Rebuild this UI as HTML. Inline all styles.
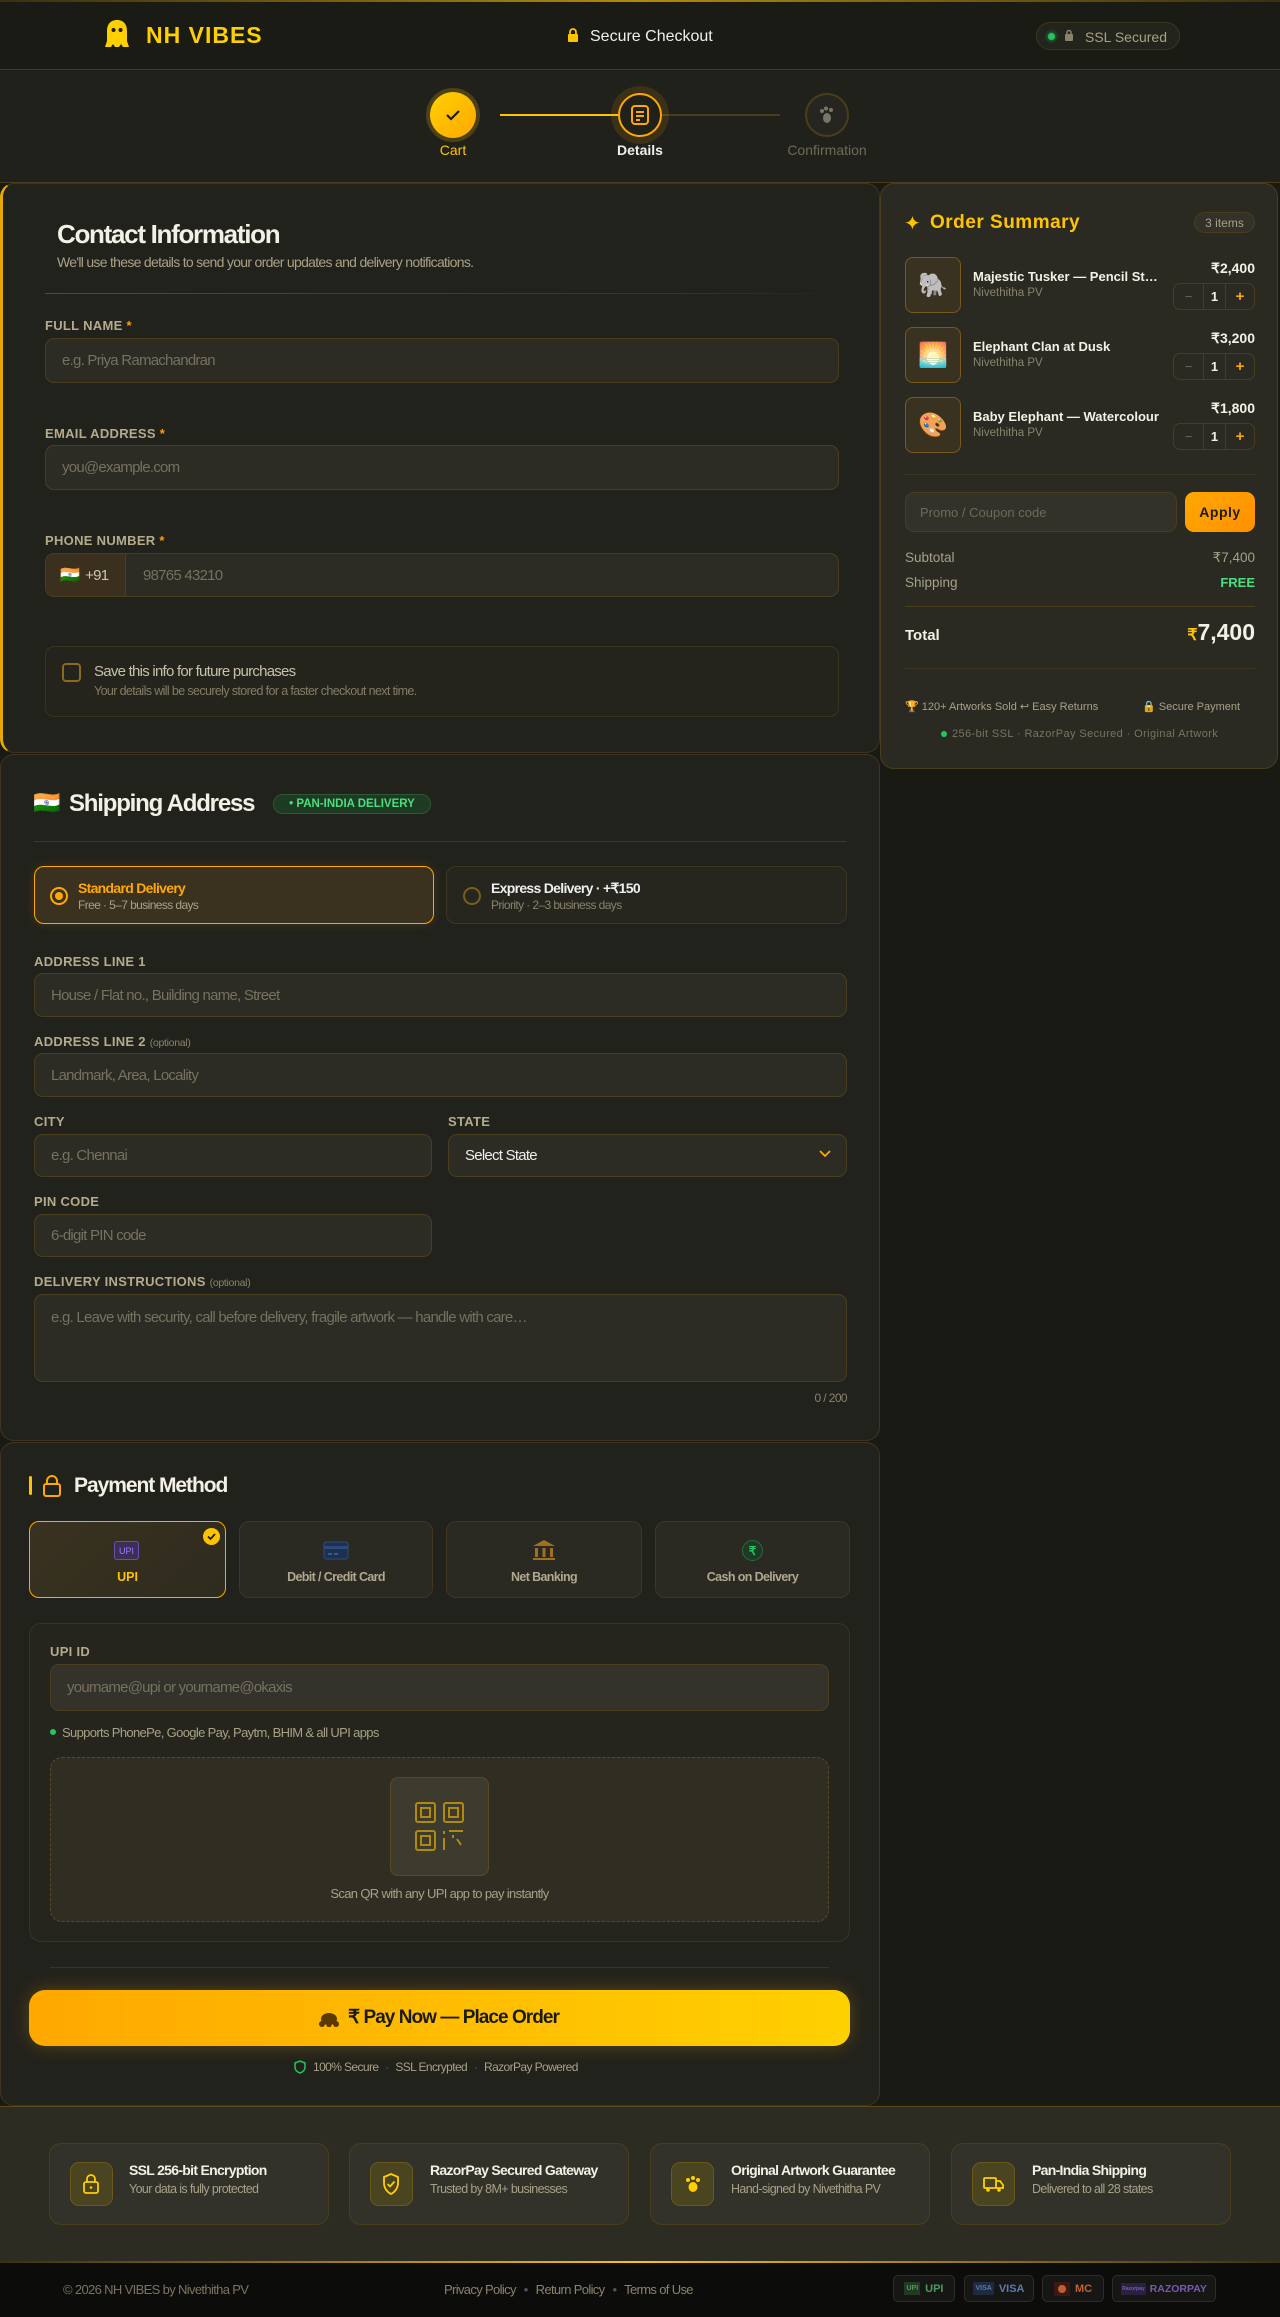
<!DOCTYPE html>
<html><head><meta charset="utf-8"><style>
*{box-sizing:border-box;margin:0;padding:0}
body{width:1280px;height:2317px;background:#1a1a15;font-family:"Liberation Sans",sans-serif;color:#eee;position:relative;overflow:hidden}
.a{position:absolute}
.n{font-family:"Liberation Sans Narrow","Liberation Sans",sans-serif;letter-spacing:-0.05em}
.panel{position:absolute;background:#22221c;border:1px solid #3d3521;border-radius:14px}
.lbl{position:absolute;font-family:"Liberation Sans Narrow","Liberation Sans",sans-serif;font-weight:bold;font-size:13px;letter-spacing:0.3px;color:#b5ab8c}
.lbl i{font-style:normal;color:#ff9f00}
.lbl s{text-decoration:none;font-weight:normal;letter-spacing:-0.3px;font-size:10.5px;color:#8a836b}
.inp{position:absolute;background:#2c2b24;border:1px solid #4a3e1f;border-radius:9px;color:#77715f;font-family:"Liberation Sans Narrow","Liberation Sans",sans-serif;font-size:15px;letter-spacing:-0.05em;padding-left:16px;display:flex;align-items:center}
</style></head><body>
<!-- header -->
<div class="a" style="left:0;top:0;width:1280px;height:70px;background:#1b1b16;border-bottom:1px solid #4a3d1c"></div>
<div class="a" style="left:0;top:0;width:1280px;height:2px;background:linear-gradient(90deg,#3a3010,#b08a10,#3a3010)"></div>
<svg class="a" style="left:104px;top:19px" width="26" height="30" viewBox="0 0 26 30"><path d="M13 1C6 1 3 6 3 12v10l-2 6h6l2-3 2 3h4l2-3 2 3h6l-2-6V12C23 6 20 1 13 1z" fill="#ffd000"/><circle cx="9.5" cy="11" r="2" fill="#1b1b16"/><circle cx="16.5" cy="11" r="2" fill="#1b1b16"/></svg>
<div class="a" style="left:146px;top:22px;font-size:23px;font-weight:bold;color:#ffd000;letter-spacing:1px">NH VIBES</div>
<svg class="a" style="left:567px;top:28px" width="12" height="15" viewBox="0 0 12 15"><rect x="1" y="6" width="10" height="8" rx="1" fill="#ffc400"/><path d="M3 6V4a3 3 0 0 1 6 0v2" stroke="#ffc400" stroke-width="1.8" fill="none"/></svg>
<div class="a n" style="left:590px;top:28px;font-size:16px;color:#eee;letter-spacing:0">Secure Checkout</div>
<div class="a" style="left:1036px;top:22px;width:144px;height:28px;border-radius:14px;background:#23241c;border:1px solid #3a3620"></div>
<div class="a" style="left:1048px;top:33px;width:7px;height:7px;border-radius:50%;background:#22c55e;box-shadow:0 0 5px #22c55e"></div>
<svg class="a" style="left:1064px;top:29px" width="10" height="13" viewBox="0 0 10 13"><rect x="1" y="5" width="8" height="7" rx="1" fill="#8a836b"/><path d="M3 5V3.5a2 2 0 0 1 4 0V5" stroke="#8a836b" stroke-width="1.5" fill="none"/></svg>
<div class="a n" style="left:1085px;top:29px;font-size:14px;color:#a8a186;letter-spacing:0">SSL Secured</div>
<!-- stepper -->
<div class="a" style="left:0;top:71px;width:1280px;height:112px;background:#21211b;border-bottom:1px solid #4a3d1c"></div>
<div class="a" style="left:500px;top:114px;width:280px;height:2px;background:#4a3d1c"></div>
<div class="a" style="left:500px;top:114px;width:140px;height:2px;background:#ffc400"></div>
<div class="a" style="left:430px;top:92px;width:46px;height:46px;border-radius:50%;background:linear-gradient(135deg,#ffd000,#ffa800);box-shadow:0 0 0 4px rgba(255,200,0,.2)"></div>
<svg class="a" style="left:444px;top:106px" width="18" height="18" viewBox="0 0 18 18"><path d="M3 9l4 4 8-8" stroke="#1b1b16" stroke-width="2.2" fill="none"/></svg>
<div class="a" style="left:611px;top:86px;width:58px;height:58px;border-radius:50%;background:rgba(255,160,0,.12)"></div>
<div class="a" style="left:618px;top:93px;width:44px;height:44px;border-radius:50%;background:#21211b;border:2px solid #ffa800"></div>
<svg class="a" style="left:630px;top:104px" width="20" height="22" viewBox="0 0 20 22"><rect x="2" y="2" width="16" height="18" rx="3" stroke="#ffa800" stroke-width="2" fill="none"/><path d="M6 8h8M6 12h8M6 16h4" stroke="#ffa800" stroke-width="2"/></svg>
<div class="a" style="left:805px;top:93px;width:44px;height:44px;border-radius:50%;border:2px solid #4a3d1c;background:#26251f"></div>
<svg class="a" style="left:817px;top:105px" width="20" height="20" viewBox="0 0 20 20" fill="#7a756a"><ellipse cx="10" cy="13" rx="4" ry="5"/><circle cx="5" cy="6" r="2"/><circle cx="9" cy="3.5" r="2"/><circle cx="14" cy="5" r="2"/></svg>
<div class="a" style="left:413px;top:142px;width:80px;text-align:center;font-size:14px;color:#ffc400">Cart</div>
<div class="a" style="left:600px;top:142px;width:80px;text-align:center;font-size:14px;color:#eee;font-weight:bold">Details</div>
<div class="a" style="left:767px;top:142px;width:120px;text-align:center;font-size:14px;color:#6f6a58">Confirmation</div>

<!-- contact -->
<div class="panel" style="left:0;top:183px;width:880px;height:570px;border-left:3px solid #e6a800"></div>
<div class="a n" style="left:57px;top:219px;font-size:26px;font-weight:bold;color:#f3f0e6">Contact Information</div>
<div class="a n" style="left:57px;top:254px;font-size:14px;color:#a8a186">We'll use these details to send your order updates and delivery notifications.</div>
<div class="a" style="left:45px;top:293px;width:795px;height:1px;background:linear-gradient(90deg,#5a4a1e,#3a3320 80%,transparent)"></div>
<div class="lbl" style="left:45px;top:318px">FULL NAME <i>*</i></div>
<div class="inp" style="left:45px;top:338px;width:794px;height:45px">e.g. Priya Ramachandran</div>
<div class="lbl" style="left:45px;top:426px">EMAIL ADDRESS <i>*</i></div>
<div class="inp" style="left:45px;top:445px;width:794px;height:45px">you@example.com</div>
<div class="lbl" style="left:45px;top:533px">PHONE NUMBER <i>*</i></div>
<div class="inp" style="left:45px;top:553px;width:794px;height:44px;padding-left:97px">98765 43210</div>
<div class="a n" style="left:46px;top:554px;width:80px;height:42px;background:#3a301d;border-right:1px solid #4a3e1f;border-radius:9px 0 0 9px;display:flex;align-items:center;padding-left:14px;font-size:15px;color:#cfc8b0"><span style="font-size:16px;margin-right:6px">🇮🇳</span>+91</div>
<div class="a" style="left:45px;top:646px;width:794px;height:71px;border:1px solid #3a3320;border-radius:9px;background:#24241d"></div>
<div class="a" style="left:62px;top:663px;width:19px;height:19px;border:2px solid #8a6a1e;border-radius:4px"></div>
<div class="a n" style="left:94px;top:663px;font-size:15px;color:#c9c1a6">Save this info for future purchases</div>
<div class="a n" style="left:94px;top:684px;font-size:12.5px;color:#847d66">Your details will be securely stored for a faster checkout next time.</div>

<!-- shipping -->
<div class="panel" style="left:0;top:754px;width:880px;height:687px"></div>
<div class="a" style="left:33px;top:790px;font-size:22px">🇮🇳</div>
<div class="a n" style="left:69px;top:790px;font-size:24px;font-weight:bold;color:#f3f0e6">Shipping Address</div>
<div class="a n" style="left:273px;top:794px;width:158px;height:20px;border-radius:10px;background:#1d3a22;border:1px solid #2c5a33;color:#4ade80;font-size:11.5px;font-weight:bold;letter-spacing:0;display:flex;align-items:center;justify-content:center">• PAN-INDIA DELIVERY</div>
<div class="a" style="left:34px;top:841px;width:813px;height:1px;background:#3f3620"></div>
<div class="a" style="left:34px;top:866px;width:400px;height:58px;border:1.5px solid #ffa800;border-radius:10px;background:#3a311e;box-shadow:0 0 10px rgba(255,168,0,.15)"></div>
<div class="a" style="left:50px;top:887px;width:18px;height:18px;border-radius:50%;border:2px solid #ffa800"></div>
<div class="a" style="left:55px;top:892px;width:8px;height:8px;border-radius:50%;background:#ffa800"></div>
<div class="a n" style="left:78px;top:880px;font-size:14px;font-weight:bold;color:#ffa800">Standard Delivery</div>
<div class="a n" style="left:78px;top:898px;font-size:12px;color:#a8a186">Free · 5–7 business days</div>
<div class="a" style="left:446px;top:866px;width:401px;height:58px;border:1px solid #3f3620;border-radius:10px;background:#26261f"></div>
<div class="a" style="left:463px;top:887px;width:18px;height:18px;border-radius:50%;border:2px solid #7a5e1e"></div>
<div class="a n" style="left:491px;top:880px;font-size:14px;font-weight:bold;color:#eee">Express Delivery · +₹150</div>
<div class="a n" style="left:491px;top:898px;font-size:12px;color:#8a836b">Priority · 2–3 business days</div>
<div class="lbl" style="left:34px;top:954px">ADDRESS LINE 1</div>
<div class="inp" style="left:34px;top:973px;width:813px;height:44px">House / Flat no., Building name, Street</div>
<div class="lbl" style="left:34px;top:1034px">ADDRESS LINE 2 <s>(optional)</s></div>
<div class="inp" style="left:34px;top:1053px;width:813px;height:44px">Landmark, Area, Locality</div>
<div class="lbl" style="left:34px;top:1114px">CITY</div>
<div class="inp" style="left:34px;top:1134px;width:398px;height:43px">e.g. Chennai</div>
<div class="lbl" style="left:448px;top:1114px">STATE</div>
<div class="inp" style="left:448px;top:1134px;width:399px;height:43px;color:#eee">Select State</div>
<svg class="a" style="left:819px;top:1150px" width="12" height="8" viewBox="0 0 12 8"><path d="M1 1l5 5 5-5" stroke="#ffa800" stroke-width="1.8" fill="none"/></svg>
<div class="lbl" style="left:34px;top:1194px">PIN CODE</div>
<div class="inp" style="left:34px;top:1214px;width:398px;height:43px">6-digit PIN code</div>
<div class="lbl" style="left:34px;top:1274px">DELIVERY INSTRUCTIONS <s>(optional)</s></div>
<div class="inp" style="left:34px;top:1294px;width:813px;height:88px;align-items:flex-start;padding-top:14px">e.g. Leave with security, call before delivery, fragile artwork — handle with care…</div>
<div class="a n" style="left:780px;top:1391px;width:67px;text-align:right;font-size:12px;color:#8a836b">0 / 200</div>

<!-- payment -->
<div class="panel" style="left:0;top:1442px;width:880px;height:664px"></div>
<div class="a" style="left:29px;top:1476px;width:3px;height:19px;background:#ffc400;border-radius:2px"></div>
<svg class="a" style="left:42px;top:1474px" width="20" height="24" viewBox="0 0 20 24"><rect x="2" y="10" width="16" height="12" rx="2" stroke="#ffa800" stroke-width="2" fill="none"/><path d="M5 10V7a5 5 0 0 1 10 0v3" stroke="#ffa800" stroke-width="2" fill="none"/></svg>
<div class="a n" style="left:74px;top:1474px;font-size:21px;font-weight:bold;color:#f3f0e6">Payment Method</div>
<div class="a" style="left:29px;top:1521px;width:197px;height:77px;border:1.5px solid #ffa800;border-radius:10px;background:linear-gradient(135deg,#3a3220,#2e2b1e)"></div>
<div class="a" style="left:203px;top:1528px;width:17px;height:17px;border-radius:50%;background:#ffc400"></div>
<svg class="a" style="left:206px;top:1531px" width="11" height="11" viewBox="0 0 11 11"><path d="M2 5.5l2.5 2.5 4.5-5" stroke="#1b1b16" stroke-width="1.8" fill="none"/></svg>
<div class="a" style="left:114px;top:1541px;width:25px;height:19px;border:1.5px solid #6b4fb0;border-radius:3px;background:#3b2f55;color:#9d7bff;font-size:9px;display:flex;align-items:center;justify-content:center">UPI</div>
<div class="a n" style="left:29px;top:1570px;width:197px;text-align:center;font-size:12.5px;font-weight:bold;color:#ffc400;letter-spacing:0">UPI</div>
<div class="a" style="left:239px;top:1521px;width:194px;height:77px;border:1px solid #3f3620;border-radius:10px;background:#2a2922"></div>
<svg class="a" style="left:323px;top:1541px" width="26" height="19" viewBox="0 0 26 19"><rect x="1" y="1" width="24" height="17" rx="2" fill="#1e3050" stroke="#2e4a7a"/><rect x="1" y="5" width="24" height="3" fill="#2e4a7a"/><path d="M5 13h4M11 13h4" stroke="#3e6aa0" stroke-width="1.5"/></svg>
<div class="a n" style="left:239px;top:1570px;width:194px;text-align:center;font-size:12.5px;font-weight:bold;color:#b0a88e">Debit / Credit Card</div>
<div class="a" style="left:446px;top:1521px;width:196px;height:77px;border:1px solid #3f3620;border-radius:10px;background:#2a2922"></div>
<svg class="a" style="left:532px;top:1539px" width="24" height="22" viewBox="0 0 24 22" fill="#a07020"><path d="M12 1L1 7h22z"/><rect x="3" y="9" width="3" height="9"/><rect x="10.5" y="9" width="3" height="9"/><rect x="18" y="9" width="3" height="9"/><rect x="1" y="19" width="22" height="2"/></svg>
<div class="a n" style="left:446px;top:1570px;width:196px;text-align:center;font-size:12.5px;font-weight:bold;color:#b0a88e">Net Banking</div>
<div class="a" style="left:655px;top:1521px;width:195px;height:77px;border:1px solid #3f3620;border-radius:10px;background:#2a2922"></div>
<div class="a" style="left:742px;top:1540px;width:21px;height:21px;border-radius:50%;background:#1d3a26;border:1.5px solid #2a6a3a;color:#22c55e;font-size:12px;font-weight:bold;display:flex;align-items:center;justify-content:center">₹</div>
<div class="a n" style="left:655px;top:1570px;width:195px;text-align:center;font-size:12.5px;font-weight:bold;color:#b0a88e">Cash on Delivery</div>
<div class="a" style="left:29px;top:1623px;width:821px;height:319px;border:1px solid #3a3320;border-radius:12px;background:#25251e"></div>
<div class="lbl" style="left:50px;top:1644px">UPI ID</div>
<div class="inp" style="left:50px;top:1664px;width:779px;height:47px;background:#33322b">yourname@upi or yourname@okaxis</div>
<div class="a" style="left:50px;top:1729px;width:6px;height:6px;border-radius:50%;background:#22c55e"></div>
<div class="a n" style="left:62px;top:1725px;font-size:13px;color:#a8a186">Supports PhonePe, Google Pay, Paytm, BHIM &amp; all UPI apps</div>
<div class="a" style="left:50px;top:1757px;width:779px;height:165px;border:1px dashed #5a4a22;border-radius:12px;background:#302d22"></div>
<div class="a" style="left:390px;top:1777px;width:99px;height:99px;border:1px solid #5a4a22;border-radius:8px;background:#3d3a2e"></div>
<svg class="a" style="left:415px;top:1802px" width="50" height="50" viewBox="0 0 50 50" stroke="#b08a10" stroke-width="2" fill="none"><rect x="1" y="1" width="19" height="19" rx="2"/><rect x="6" y="6" width="9" height="9"/><rect x="29" y="1" width="19" height="19" rx="2"/><rect x="34" y="6" width="9" height="9"/><rect x="1" y="29" width="19" height="19" rx="2"/><rect x="6" y="34" width="9" height="9"/><path d="M29 29v3M29 36v12M34 29h14M38 33v3M42 37l4 6"/></svg>
<div class="a n" style="left:50px;top:1886px;width:779px;text-align:center;font-size:13px;color:#a8a186">Scan QR with any UPI app to pay instantly</div>
<div class="a" style="left:50px;top:1967px;width:779px;height:1px;background:#3a3320"></div>
<div class="a" style="left:29px;top:1990px;width:821px;height:56px;border-radius:16px;background:linear-gradient(90deg,#ffa800,#ffd000);box-shadow:0 0 18px rgba(255,180,0,.25)"></div>
<svg class="a" style="left:318px;top:2009px" width="22" height="18" viewBox="0 0 22 18" fill="#5a3a00"><ellipse cx="11" cy="10" rx="8" ry="6"/><circle cx="4" cy="15" r="3"/><circle cx="11" cy="16" r="2.5"/><circle cx="18" cy="15" r="3"/></svg>
<div class="a n" style="left:348px;top:2006px;font-size:19px;font-weight:bold;color:#1b1b16">₹ Pay Now — Place Order</div>
<svg class="a" style="left:294px;top:2060px" width="12" height="14" viewBox="0 0 12 14"><path d="M6 1l5 2v4c0 3-2 5-5 6-3-1-5-3-5-6V3z" stroke="#22c55e" stroke-width="1.5" fill="none"/></svg>
<div class="a n" style="left:313px;top:2060px;font-size:12px;color:#a8a186">100% Secure <span style="color:#555;margin:0 4px">·</span> SSL Encrypted <span style="color:#555;margin:0 4px">·</span> RazorPay Powered</div>

<!-- right summary -->
<div class="panel" style="left:880px;top:183px;width:398px;height:586px;background:#2a2a23;border-color:#4a3d1c"></div>
<div class="a" style="left:904px;top:211px;font-size:20px;color:#ffc400">✦</div>
<div class="a" style="left:930px;top:212px;font-size:19px;font-weight:bold;color:#ffc400;letter-spacing:.5px">Order Summary</div>
<div class="a" style="left:1194px;top:212px;width:61px;height:21px;border-radius:11px;border:1px solid #4a3d1c;background:#33322a;color:#a8a186;font-size:12px;display:flex;align-items:center;justify-content:center">3 items</div>
<div class="a" style="left:905px;top:257px;width:56px;height:56px;border:1px solid #7a5a1a;border-radius:8px;background:#3a3220;display:flex;align-items:center;justify-content:center;font-size:24px">🐘</div>
<div class="a" style="left:973px;top:269px;font-size:13px;font-weight:bold;color:#f3f0e6">Majestic Tusker — Pencil St…</div>
<div class="a" style="left:973px;top:287px;font-size:11.5px;color:#8a836b">Nivethitha PV</div>
<div class="a" style="left:1180px;top:260px;width:75px;text-align:right;font-size:14px;font-weight:bold;color:#f3f0e6">₹2,400</div>
<div class="a" style="left:905px;top:327px;width:56px;height:56px;border:1px solid #7a5a1a;border-radius:8px;background:#3a3220;display:flex;align-items:center;justify-content:center;font-size:24px">🌅</div>
<div class="a" style="left:973px;top:339px;font-size:13px;font-weight:bold;color:#f3f0e6">Elephant Clan at Dusk</div>
<div class="a" style="left:973px;top:357px;font-size:11.5px;color:#8a836b">Nivethitha PV</div>
<div class="a" style="left:1180px;top:330px;width:75px;text-align:right;font-size:14px;font-weight:bold;color:#f3f0e6">₹3,200</div>
<div class="a" style="left:905px;top:397px;width:56px;height:56px;border:1px solid #7a5a1a;border-radius:8px;background:#3a3220;display:flex;align-items:center;justify-content:center;font-size:24px">🎨</div>
<div class="a" style="left:973px;top:409px;font-size:13px;font-weight:bold;color:#f3f0e6">Baby Elephant — Watercolour</div>
<div class="a" style="left:973px;top:427px;font-size:11.5px;color:#8a836b">Nivethitha PV</div>
<div class="a" style="left:1180px;top:400px;width:75px;text-align:right;font-size:14px;font-weight:bold;color:#f3f0e6">₹1,800</div>
<div class="a" style="left:1173px;top:283px;width:82px;height:27px;border:1px solid #4a3d1c;border-radius:7px;display:flex;font-size:13px"><span style="width:29px;text-align:center;line-height:25px;color:#666">−</span><span style="width:23px;text-align:center;line-height:25px;border-left:1px solid #4a3d1c;border-right:1px solid #4a3d1c;color:#eee;font-weight:bold">1</span><span style="flex:1;text-align:center;line-height:25px;color:#ffa800;font-weight:bold;font-size:15px">+</span></div>
<div class="a" style="left:1173px;top:353px;width:82px;height:27px;border:1px solid #4a3d1c;border-radius:7px;display:flex;font-size:13px"><span style="width:29px;text-align:center;line-height:25px;color:#666">−</span><span style="width:23px;text-align:center;line-height:25px;border-left:1px solid #4a3d1c;border-right:1px solid #4a3d1c;color:#eee;font-weight:bold">1</span><span style="flex:1;text-align:center;line-height:25px;color:#ffa800;font-weight:bold;font-size:15px">+</span></div>
<div class="a" style="left:1173px;top:423px;width:82px;height:27px;border:1px solid #4a3d1c;border-radius:7px;display:flex;font-size:13px"><span style="width:29px;text-align:center;line-height:25px;color:#666">−</span><span style="width:23px;text-align:center;line-height:25px;border-left:1px solid #4a3d1c;border-right:1px solid #4a3d1c;color:#eee;font-weight:bold">1</span><span style="flex:1;text-align:center;line-height:25px;color:#ffa800;font-weight:bold;font-size:15px">+</span></div>
<div class="a" style="left:905px;top:474px;width:350px;height:1px;background:#3f3620"></div>
<div class="a" style="left:905px;top:492px;width:272px;height:40px;border:1px solid #4a3d1c;border-radius:9px;background:#33322a;color:#6f6a58;font-size:13px;padding-left:14px;display:flex;align-items:center">Promo / Coupon code</div>
<div class="a" style="left:1185px;top:492px;width:70px;height:40px;border-radius:9px;background:linear-gradient(135deg,#ffa800,#ff9000);color:#1b1b16;font-size:14px;font-weight:bold;display:flex;align-items:center;justify-content:center;letter-spacing:.5px">Apply</div>
<div class="a" style="left:905px;top:550px;font-size:13.5px;color:#a8a186">Subtotal</div>
<div class="a" style="left:1150px;top:550px;width:105px;text-align:right;font-size:13.5px;color:#a8a186">₹7,400</div>
<div class="a" style="left:905px;top:575px;font-size:13.5px;color:#a8a186">Shipping</div>
<div class="a" style="left:1150px;top:575px;width:105px;text-align:right;font-size:13px;font-weight:bold;color:#4ade80">FREE</div>
<div class="a" style="left:905px;top:606px;width:350px;height:1px;background:#4a3d1c"></div>
<div class="a" style="left:905px;top:627px;font-size:15px;font-weight:bold;color:#f3f0e6">Total</div>
<div class="a" style="left:1100px;top:619px;width:155px;text-align:right;font-size:23px;font-weight:bold;color:#f3f0e6"><span style="color:#ffc400;font-size:16px">₹</span>7,400</div>
<div class="a" style="left:905px;top:668px;width:350px;height:1px;background:#3f3620"></div>
<div class="a" style="left:905px;top:700px;font-size:11px;color:#a8a186">🏆 120+ Artworks Sold ↩ Easy Returns</div>
<div class="a" style="left:1142px;top:700px;font-size:11px;color:#a8a186">🔒 Secure Payment</div>
<div class="a" style="left:941px;top:731px;width:6px;height:6px;border-radius:50%;background:#22c55e"></div>
<div class="a" style="left:952px;top:728px;font-size:11px;color:#7a745f;letter-spacing:.4px">256-bit SSL · RazorPay Secured · Original Artwork</div>

<!-- trust strip -->
<div class="a" style="left:0;top:2106px;width:1280px;height:156px;background:#2d2c22;border-top:1px solid #5a4a1a"></div>
<div class="a" style="left:0;top:2261px;width:1280px;height:2px;background:linear-gradient(90deg,#3a3010,#ffc400 50%,#3a3010)"></div>

<div class="a" style="left:49px;top:2143px;width:280px;height:82px;border:1px solid #4a3d1c;border-radius:12px;background:#33322a"></div>
<div class="a" style="left:70px;top:2162px;width:43px;height:44px;border:1px solid #6a5a1a;border-radius:9px;background:#4a4420"></div>
<svg class="a" style="left:82px;top:2173px" width="18" height="22" viewBox="0 0 18 22"><rect x="2" y="9" width="14" height="11" rx="2" stroke="#ffd000" stroke-width="1.8" fill="none"/><path d="M5 9V6a4 4 0 0 1 8 0v3" stroke="#ffd000" stroke-width="1.8" fill="none"/><circle cx="9" cy="14.5" r="1.3" fill="#ffd000"/></svg>
<div class="a n" style="left:129px;top:2162px;font-size:14px;font-weight:bold;color:#f3f0e6">SSL 256-bit Encryption</div>
<div class="a n" style="left:129px;top:2182px;font-size:12.5px;color:#a8a186">Your data is fully protected</div>

<div class="a" style="left:349px;top:2143px;width:280px;height:82px;border:1px solid #4a3d1c;border-radius:12px;background:#33322a"></div>
<div class="a" style="left:370px;top:2162px;width:43px;height:44px;border:1px solid #6a5a1a;border-radius:9px;background:#4a4420"></div>
<svg class="a" style="left:382px;top:2173px" width="18" height="22" viewBox="0 0 18 22"><path d="M9 1l7 3v6c0 5-3 9-7 11-4-2-7-6-7-11V4z" stroke="#ffd000" stroke-width="1.8" fill="none"/><path d="M5.5 11l2.5 2.5 4.5-5" stroke="#ffd000" stroke-width="1.8" fill="none"/></svg>
<div class="a n" style="left:430px;top:2162px;font-size:14px;font-weight:bold;color:#f3f0e6">RazorPay Secured Gateway</div>
<div class="a n" style="left:430px;top:2182px;font-size:12.5px;color:#a8a186">Trusted by 8M+ businesses</div>

<div class="a" style="left:650px;top:2143px;width:280px;height:82px;border:1px solid #4a3d1c;border-radius:12px;background:#33322a"></div>
<div class="a" style="left:671px;top:2162px;width:43px;height:44px;border:1px solid #6a5a1a;border-radius:9px;background:#4a4420"></div>
<svg class="a" style="left:684px;top:2175px" width="18" height="18" viewBox="0 0 18 18" fill="#ffd000"><ellipse cx="9" cy="12" rx="4.5" ry="5"/><circle cx="4" cy="5" r="2"/><circle cx="9" cy="3" r="2"/><circle cx="14" cy="5" r="2"/></svg>
<div class="a n" style="left:731px;top:2162px;font-size:14px;font-weight:bold;color:#f3f0e6">Original Artwork Guarantee</div>
<div class="a n" style="left:731px;top:2182px;font-size:12.5px;color:#a8a186">Hand-signed by Nivethitha PV</div>

<div class="a" style="left:951px;top:2143px;width:280px;height:82px;border:1px solid #4a3d1c;border-radius:12px;background:#33322a"></div>
<div class="a" style="left:972px;top:2162px;width:43px;height:44px;border:1px solid #6a5a1a;border-radius:9px;background:#4a4420"></div>
<svg class="a" style="left:983px;top:2175px" width="22" height="18" viewBox="0 0 22 18"><rect x="1" y="3" width="12" height="10" rx="1" stroke="#ffd000" stroke-width="1.8" fill="none"/><path d="M13 6h4l3 4v3h-7" stroke="#ffd000" stroke-width="1.8" fill="none"/><circle cx="5" cy="15" r="1.8" fill="#ffd000"/><circle cx="16" cy="15" r="1.8" fill="#ffd000"/></svg>
<div class="a n" style="left:1032px;top:2162px;font-size:14px;font-weight:bold;color:#f3f0e6">Pan-India Shipping</div>
<div class="a n" style="left:1032px;top:2182px;font-size:12.5px;color:#a8a186">Delivered to all 28 states</div>

<!-- footer -->
<div class="a" style="left:0;top:2263px;width:1280px;height:54px;background:#0c0c0a"></div>
<div class="a n" style="left:63px;top:2282px;font-size:13px;color:#7a745f">© 2026 NH VIBES by Nivethitha PV</div>
<div class="a n" style="left:444px;top:2282px;font-size:13px;color:#8a836b">Privacy Policy <span style="color:#555;margin:0 5px">•</span> Return Policy <span style="color:#555;margin:0 5px">•</span> Terms of Use</div>
<div class="a" style="left:893px;top:2275px;width:62px;height:27px;border:1px solid #2e2e28;border-radius:5px;background:#161614;font-size:11px;font-weight:bold;color:#4a9a5a;display:flex;align-items:center;justify-content:center;gap:5px"><span style="font-size:7px;background:#223a22;padding:3px 2px">UPI</span>UPI</div>
<div class="a" style="left:964px;top:2275px;width:70px;height:27px;border:1px solid #2e2e28;border-radius:5px;background:#161614;font-size:11px;font-weight:bold;color:#5a7ab0;display:flex;align-items:center;justify-content:center;gap:5px"><span style="font-size:7px;background:#1e2a40;padding:3px 2px">VISA</span>VISA</div>
<div class="a" style="left:1042px;top:2275px;width:62px;height:27px;border:1px solid #2e2e28;border-radius:5px;background:#161614;font-size:11px;font-weight:bold;color:#c06030;display:flex;align-items:center;justify-content:center;gap:5px"><span style="width:16px;height:14px;background:#3a1a10;display:flex;align-items:center;justify-content:center"><span style="width:8px;height:8px;border-radius:50%;background:#c06030"></span></span>MC</div>
<div class="a" style="left:1112px;top:2275px;width:104px;height:27px;border:1px solid #2e2e28;border-radius:5px;background:#161614;font-size:10.5px;font-weight:bold;color:#7a5ab0;display:flex;align-items:center;justify-content:center;gap:4px"><span style="font-size:5px;background:#2a2040;padding:3px 1px">Razorpay</span>RAZORPAY</div>
</body></html>
